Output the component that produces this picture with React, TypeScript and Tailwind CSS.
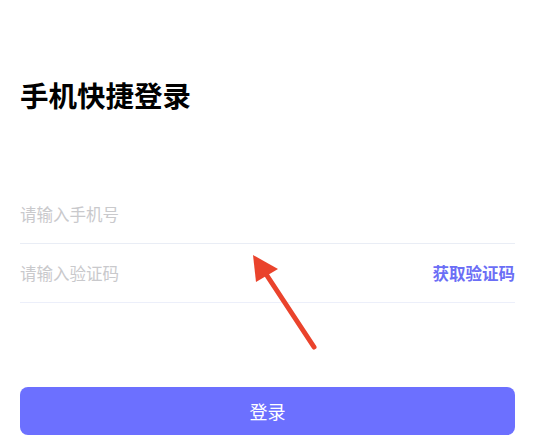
import { useState } from 'react'

const font = { fontFamily: '"Noto Sans CJK SC", "Noto Sans", sans-serif' }

function Arrow() {
  return (
    <svg
      className="pointer-events-none absolute left-0 top-0"
      width="535"
      height="440"
      viewBox="0 0 535 440"
    >
      <line x1="262" y1="268" x2="314" y2="347" stroke="#ea432c" strokeWidth="5" strokeLinecap="round" />
      <polygon points="253,255 278,269 256,282" fill="#ea432c" />
    </svg>
  )
}

export default function App() {
  const [phone, setPhone] = useState('')
  const [code, setCode] = useState('')

  return (
    <div className="relative h-[440px] w-[535px] overflow-hidden bg-white px-5" style={font}>
      <h1 className="pt-[77px] text-[28.5px] font-bold leading-[36px] text-black">手机快捷登录</h1>

      <div className="mt-[73px]">
        <div className="flex h-[58px] items-center border-b border-[#e9edf5]">
          <input
            value={phone}
            onChange={(e) => setPhone(e.target.value)}
            placeholder="请输入手机号"
            className="w-full bg-transparent text-[16.5px] outline-none placeholder:text-[#c9c9cc]"
            style={font}
          />
        </div>
        <div className="flex h-[59px] items-center border-b-[1.5px] border-[#eceffa]">
          <input
            value={code}
            onChange={(e) => setCode(e.target.value)}
            placeholder="请输入验证码"
            className="min-w-0 flex-1 bg-transparent text-[16.5px] outline-none placeholder:text-[#c9c9cc]"
            style={font}
          />
          <button className="shrink-0 text-[16.5px] font-bold text-[#6b6ef6]" style={font}>
            获取验证码
          </button>
        </div>
      </div>

      <button
        className="mt-[84px] flex h-[48px] w-full items-center justify-center rounded-lg bg-[#6c70ff] text-[18px] text-white"
        style={font}
      >
        登录
      </button>

      <Arrow />
    </div>
  )
}
